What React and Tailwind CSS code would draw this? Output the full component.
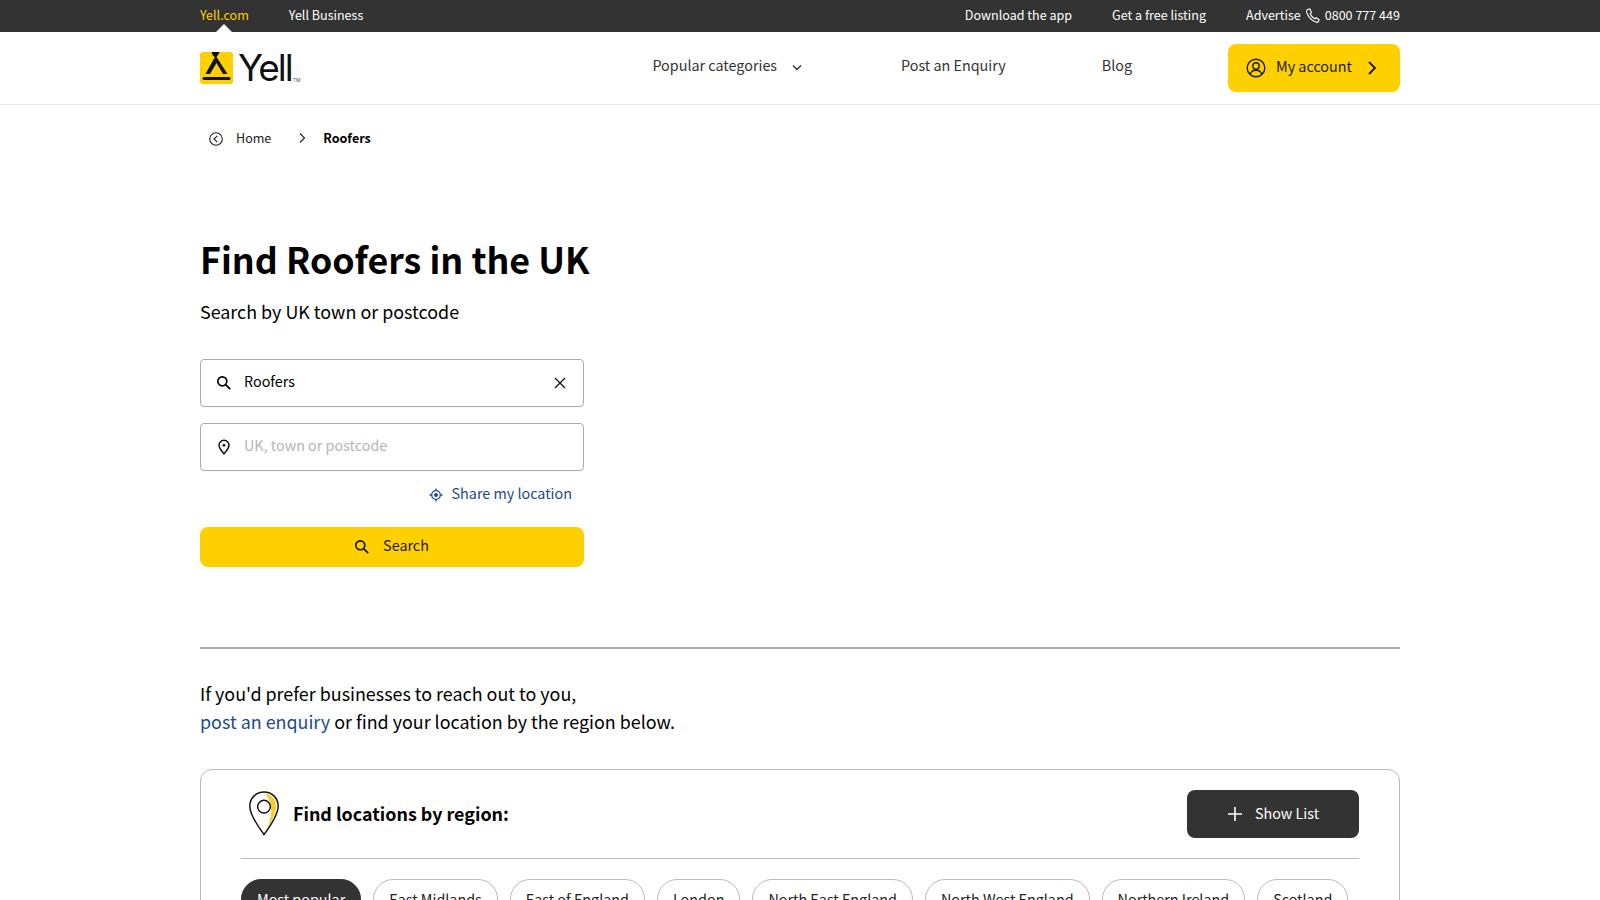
import React from "react";

function SearchIcon({ className }) {
  return (
    <svg viewBox="0 0 16 16" className={className} fill="none" stroke="currentColor">
      <circle cx="6.300" cy="6.300" r="4.500" strokeWidth="1.700" />
      <path d="M9.600 9.600 14.200 14.200" strokeWidth="1.900" />
    </svg>
  );
}

function Logo() {
  return (
    <div className="flex items-end h-[34px] -mt-[2px]">
      <svg viewBox="0 0 33 32" className="w-[33px] h-[32px] shrink-0">
        <rect x="0" y="0" width="33" height="32" rx="3" fill="#ffd000" />
        <path d="M11.500 0h8l-.5 1.500-2.500 3.500 1 1.500L27.500 22H23L16.500 11 10 22H5.500l8-14.500L15 5.500 12.500 3z" fill="#111" />
        <path d="M4 26.500h25" stroke="#111" strokeWidth="3" strokeLinecap="round" />
      </svg>
      <span className="font-['Inter',sans-serif] text-[37px] leading-[32px] font-normal text-[#111] ml-[5px] tracking-[-2px]">Yell</span>
      <span className="font-['Inter',sans-serif] text-[5px] leading-[8px] text-[#555] ml-[1px]">TM</span>
    </div>
  );
}

function TopLink({ children, className = "" }) {
  return <a className={"block h-[32px] text-white text-[12.56px] leading-[30px] " + className}>{children}</a>;
}

function Pill({ children, active }) {
  return (
    <div
      className={
        "h-[40px] rounded-[20px] px-[15px] flex items-center text-[14.35px] leading-[24px] border whitespace-nowrap " +
        (active ? "bg-[#333333] border-[#333333] text-white" : "bg-white border-[#bbbbbb] text-[#222222]")
      }
    >
      {children}
    </div>
  );
}

export default function App() {
  return (
    <div className="h-[900px] overflow-hidden bg-white text-black font-['Noto_Sans_CJK_JP','Noto_Sans',sans-serif]">
      <div className="bg-[#333333] h-[32px]">
        <div className="w-[1200px] mx-auto h-full flex items-center justify-between">
          <div className="flex gap-[40px]">
            <div className="relative h-[32px]">
              <TopLink className="!text-[#ffd000]">Yell.com</TopLink>
              <div className="absolute left-[16px] bottom-0 w-0 h-0 border-x-[8px] border-x-transparent border-b-[8px] border-b-white" />
            </div>
            <TopLink>Yell Business</TopLink>
          </div>
          <div className="flex items-center gap-[40px]">
            <TopLink>Download the app</TopLink>
            <TopLink>Get a free listing</TopLink>
            <div className="flex items-center">
              <TopLink>Advertise</TopLink>
              <svg viewBox="0 0 16 16" className="w-[16px] h-[16px] mx-[4px] text-white" fill="none" stroke="currentColor" strokeWidth="1.100">
                <path d="M2.500 1.500 4.800 1l1.700 3.300-1.300 1.500c.7 2 2.500 4 4.700 5l1.500-1 2.800 2.200-.9 1.700c-.5.600-1.200.800-2 .6C6.500 12.500 3 8.500 1.500 3.800c-.1-1 .2-1.800 1-2.300z" />
              </svg>
              <TopLink>0800 777 449</TopLink>
            </div>
          </div>
        </div>
      </div>

      <header className="h-[73px] border-b border-[#e5e5e5]">
        <div className="w-[1200px] mx-auto h-[72px] flex items-center">
          <Logo />
          <nav className="ml-auto flex items-center text-[14.35px] text-[#333333]">
            <span className="leading-[24px] -mt-[6px]">Popular categories</span>
            <svg viewBox="0 0 12 12" className="w-[12px] h-[12px] ml-[14px] mr-[98px]" fill="none" stroke="currentColor" strokeWidth="1.400">
              <path d="M2 3.500 6 7.500 10 3.500" />
            </svg>
            <span className="leading-[24px] -mt-[6px] mr-[96px]">Post an Enquiry</span>
            <span className="leading-[24px] -mt-[6px] mr-[96px]">Blog</span>
            <button className="w-[172px] h-[48px] rounded-[8px] bg-[#ffd000] flex items-center pl-[18px] text-[#1a1a1a]">
              <svg viewBox="0 0 20 20" className="w-[20px] h-[20px]" fill="none" stroke="currentColor" strokeWidth="1.400">
                <circle cx="10" cy="10" r="8.800" />
                <circle cx="10" cy="8" r="3.200" />
                <path d="M4.300 16c1-3 3-3.800 5.700-3.800s4.700.8 5.700 3.800" />
              </svg>
              <span className="ml-[10px] text-[14.35px] leading-[24px] -mt-[4px]">My account</span>
              <svg viewBox="0 0 12 16" className="w-[12px] h-[16px] ml-[14px]" fill="none" stroke="currentColor" strokeWidth="1.800">
                <path d="M3 2 9 8 3 14" />
              </svg>
            </button>
          </nav>
        </div>
      </header>

      <main className="w-[1200px] mx-auto">
        <div className="h-[66px] flex items-center text-[12.56px] pl-[9px]">
          <svg viewBox="0 0 14 14" className="w-[14px] h-[14px] mt-[1px]" fill="none" stroke="#222" strokeWidth="1.100">
            <circle cx="7" cy="7" r="6.300" />
            <path d="M8.300 3.800 5 7l3.300 3.200" />
          </svg>
          <span className="ml-[13px] text-[#222222] leading-[20px]">Home</span>
          <svg viewBox="0 0 10 12" className="w-[10px] h-[12px] ml-[26px]" fill="none" stroke="#222" strokeWidth="1.100">
            <path d="M3 1.500 7.500 6 3 10.500" />
          </svg>
          <span className="ml-[16px] font-bold leading-[20px]">Roofers</span>
        </div>

        <h1 className="mt-[61px] text-[35.8px] leading-[52px] font-bold">Find Roofers in the UK</h1>
        <p className="mt-[13px] text-[17.9px] leading-[28px]">Search by UK town or postcode</p>

        <div className="w-[384px] mt-[34px]">
          <div className="h-[48px] border border-[#aaaaaa] rounded-[4px] flex items-center pl-[15px] pr-[17px]">
            <SearchIcon className="w-[16px] h-[16px] shrink-0" />
            <span className="ml-[12px] text-[14.35px] leading-[24px] -mt-[5px]">Roofers</span>
            <svg viewBox="0 0 12 12" className="w-[12px] h-[12px] ml-auto" fill="none" stroke="#111" strokeWidth="1.300">
              <path d="M1 1 11 11M11 1 1 11" />
            </svg>
          </div>
          <div className="mt-[16px] h-[48px] border border-[#aaaaaa] rounded-[4px] flex items-center pl-[16px]">
            <svg viewBox="0 0 14 16" className="w-[14px] h-[16px] shrink-0" fill="none" stroke="#111" strokeWidth="1.500">
              <path d="M7 14.800C4 11.500 2 9 2 6.300a5 5 0 0 1 10 0C12 9 10 11.500 7 14.800z" />
              <circle cx="7" cy="6.300" r="1.400" fill="#111" stroke="none" />
            </svg>
            <span className="ml-[13px] text-[14.35px] leading-[24px] -mt-[5px] text-[#b5b5b5]">UK, town or postcode</span>
          </div>
          <div className="flex items-center justify-end h-[24px] mt-[11px] pr-[12px] text-[#1c4a8c]">
            <svg viewBox="0 0 14 14" className="w-[14px] h-[14px] mt-[1px]" fill="none" stroke="currentColor" strokeWidth="1.300">
              <circle cx="7" cy="7" r="4.300" />
              <circle cx="7" cy="7" r="2" fill="currentColor" stroke="none" />
              <path d="M7 .5v2M7 11.500v2M.5 7h2M11.500 7h2" />
            </svg>
            <span className="ml-[9px] text-[14.35px] leading-[24px] -mt-[2px]">Share my location</span>
          </div>
          <button className="mt-[21px] w-full h-[40px] rounded-[8px] bg-[#ffd000] flex items-center justify-center text-[#1a1a1a]">
            <SearchIcon className="w-[16px] h-[16px]" />
            <span className="ml-[13px] mr-[1px] text-[14.35px] leading-[24px] -mt-[5px]">Search</span>
          </button>
        </div>

        <div className="mt-[80px] border-t-2 border-[#aaaaaa]" />

        <p className="mt-[30px] text-[17.9px] leading-[28px]">
          If you'd prefer businesses to reach out to you,
          <br />
          <a className="text-[#1c4a8c]">post an enquiry</a> or find your location by the region below.
        </p>

        <section className="mt-[34px] border border-[#bbbbbb] rounded-[12px] px-[40px] pt-[20px] pb-[24px]">
          <div className="flex items-center justify-between h-[48px] border-b border-[#bbbbbb] box-content pb-[20px]">
            <div className="flex items-center pl-[7px]">
              <svg viewBox="0 0 32 46" className="w-[32px] h-[45px] -mt-[1px]">
                <path d="M16 1C7.500 1 1.500 7.500 1.500 15.500 1.500 24 9 35 16 44.500 23 35 30.500 24 30.500 15.500 30.500 7.500 24.500 1 16 1z" fill="#fff" />
                <path d="M17 3c7 0 11.500 6 11.500 12.500C28.500 23 23 33 18 40c5-10 6-18 5-24-.7-6-3-10-6-13z" fill="#f5cf2a" />
                <path d="M16 1C7.500 1 1.500 7.500 1.500 15.500 1.500 24 9 35 16 44.500 23 35 30.500 24 30.500 15.500 30.500 7.500 24.500 1 16 1z" fill="none" stroke="#111" strokeWidth="1.500" />
                <circle cx="16" cy="16" r="6.500" fill="#fff" stroke="#111" strokeWidth="1.500" />
              </svg>
              <h2 className="ml-[13px] text-[17.9px] leading-[28px] font-bold -mt-[2px]">Find locations by region:</h2>
            </div>
            <button className="w-[172px] h-[48px] rounded-[8px] bg-[#333333] text-white flex items-center justify-center">
              <svg viewBox="0 0 16 16" className="w-[16px] h-[16px]" fill="none" stroke="currentColor" strokeWidth="1.600">
                <path d="M8 1v14M1 8h14" />
              </svg>
              <span className="ml-[12px] text-[14.35px] leading-[24px] -mt-[3px]">Show List</span>
            </button>
          </div>
          <div className="mt-[20px] flex gap-[12px]">
            <Pill active>Most popular</Pill>
            <Pill>East Midlands</Pill>
            <Pill>East of England</Pill>
            <Pill>London</Pill>
            <Pill>North East England</Pill>
            <Pill>North West England</Pill>
            <Pill>Northern Ireland</Pill>
            <Pill>Scotland</Pill>
          </div>
        </section>
      </main>
    </div>
  );
}
